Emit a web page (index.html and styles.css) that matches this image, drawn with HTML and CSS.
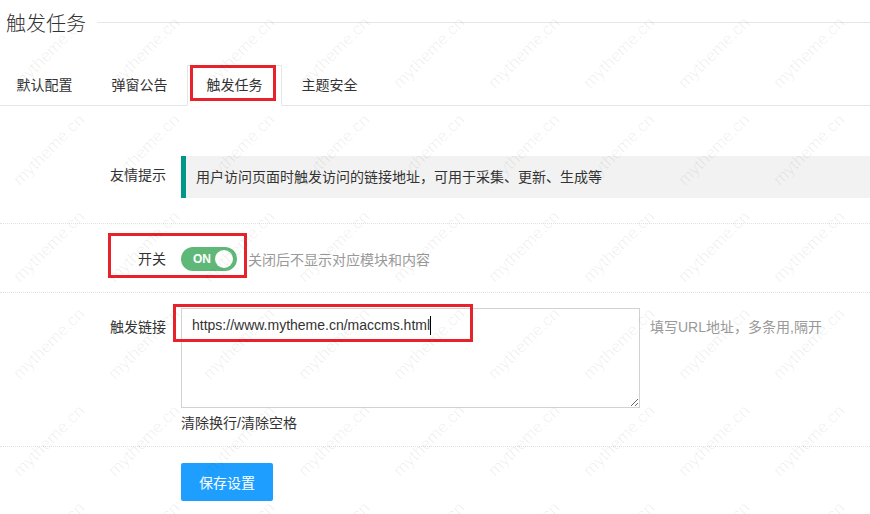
FILE: index.html
```html
<!DOCTYPE html>
<html lang="zh-CN">
<head>
  <meta charset="UTF-8">
  <meta name="viewport" content="width=device-width, initial-scale=1.0">
  <title>触发任务</title>
  <link rel="stylesheet" href="styles.css">
</head>
<body>
  <div class="page-title">
    <span class="page-title-text">触发任务</span>
    <span class="page-title-line"></span>
  </div>

  <ul class="tab-title">
    <li>默认配置</li>
    <li>弹窗公告</li>
    <li class="tab-this">触发任务<span class="mark mark-tab"></span></li>
    <li>主题安全</li>
  </ul>

  <form class="tab-body" onsubmit="return false">
    <div class="form-item item-tips">
      <label class="form-label">友情提示</label>
      <div class="tips-box">用户访问页面时触发访问的链接地址，可用于采集、更新、生成等</div>
    </div>

    <div class="form-item item-switch">
      <label class="form-label">开关</label>
      <div class="input-block">
        <span class="switch"><em>ON</em><i></i></span>
        <span class="form-hint">关闭后不显示对应模块和内容</span>
      </div>
      <span class="mark mark-switch"></span>
    </div>

    <div class="form-item item-links">
      <label class="form-label">触发链接</label>
      <div class="input-block">
        <div class="textarea-line">
          <textarea class="textarea" name="links">https://www.mytheme.cn/maccms.html</textarea>
          <span class="form-hint">填写URL地址，多条用,隔开</span>
          <span class="caret"></span>
          <span class="mark mark-link"></span>
        </div>
        <div class="text-tools">清除换行/清除空格</div>
      </div>
    </div>

    <div class="form-item item-submit">
      <span></span>
      <div class="input-block">
        <button class="btn" type="submit">保存设置</button>
      </div>
    </div>
  </form>

  <div class="watermark" id="watermark"></div>

  <script>
    // fill the watermark grid
    var wm = document.getElementById('watermark');
    for (var i = 0; i < 60; i++) {
      var s = document.createElement('span');
      s.textContent = 'mytheme.cn';
      wm.appendChild(s);
    }
  </script>
</body>
</html>
```

FILE: styles.css
```css
* {
  box-sizing: border-box;
}

body {
  margin: 0;
  background: #fff;
  color: #333;
  font-family: "Liberation Sans", "Noto Sans CJK SC", sans-serif;
  font-size: 14px;
  overflow: hidden;
  position: relative;
  min-height: 514px;
}

/* page heading with rule */
.page-title {
  display: flex;
  align-items: center;
  height: 28px;
  margin-top: 8px;
  padding-left: 6px;
}
.page-title-text {
  font-size: 20px;
  font-weight: 300;
  color: #333;
}
.page-title-line {
  flex: 1;
  border-top: 1px solid #e6e6e6;
  margin-left: 11px;
}

/* tabs */
.tab-title {
  display: flex;
  align-items: flex-start;
  list-style: none;
  margin: 29px 0 0;
  padding: 0;
  height: 41px;
  border-bottom: 1px solid #e6e6e6;
}
.tab-title li {
  position: relative;
  width: 95px;
  height: 41px;
  line-height: 39px;
  margin-bottom: -1px;
  text-align: center;
  border: 1px solid transparent;
  color: #333;
}
.tab-title li:first-child {
  margin-left: -3px;
}
.tab-title .tab-this {
  border-color: #e6e6e6;
  border-bottom-color: #fff;
  background: #fff;
}

/* form rows */
.form-item {
  position: relative;
  display: grid;
  grid-template-columns: 181px 1fr;
  border-bottom: 1px dotted #e2e2e2;
}
.form-label {
  text-align: right;
  padding-right: 15px;
  color: #333;
}
.item-tips {
  padding: 50px 0 25px;
}
.item-tips .form-label {
  line-height: 38px;
}
.tips-box {
  height: 42px;
  line-height: 42px;
  padding: 0 10px;
  background: #f2f2f2;
  border-left: 5px solid #009688;
  white-space: nowrap;
}

.item-switch {
  padding: 23px 0 21px;
}
.item-switch .form-label {
  line-height: 24px;
}
.input-block {
  display: flex;
  flex-direction: column;
  align-items: flex-start;
}
.item-switch .input-block {
  flex-direction: row;
  align-items: center;
}
.switch {
  position: relative;
  display: inline-flex;
  align-items: center;
  width: 56px;
  height: 24px;
  padding-left: 12px;
  border-radius: 20px;
  background: #5fb878;
}
.switch em {
  font-style: normal;
  font-size: 12px;
  font-weight: bold;
  color: #fff;
}
.switch i {
  position: absolute;
  right: 4px;
  top: 3px;
  width: 18px;
  height: 18px;
  border-radius: 50%;
  background: #fff;
}
.form-hint {
  color: #999;
  white-space: nowrap;
}
.item-switch .form-hint {
  margin-left: 11px;
}

.item-links {
  padding: 15px 0 13px;
}
.item-links .form-label {
  line-height: 38px;
}
.textarea-line {
  position: relative;
  display: flex;
  align-items: flex-start;
}
.textarea {
  display: block;
  width: 459px;
  height: 100px;
  padding: 6px 10px;
  border: 1px solid #d2d2d2;
  border-radius: 0;
  font-family: "Liberation Sans", "Noto Sans CJK SC", sans-serif;
  font-size: 14px;
  line-height: 20px;
  color: #333;
  resize: vertical;
  outline: none;
}
/* text cursor after the typed link */
.caret {
  position: absolute;
  left: 249px;
  top: 8px;
  width: 1px;
  height: 19px;
  background: #000;
}
.textarea-line .form-hint {
  margin-left: 10px;
  line-height: 38px;
}
.text-tools {
  margin-top: 5px;
  line-height: 20px;
  color: #333;
}

.item-submit {
  padding: 16px 0 20px;
  border-bottom: none;
}
.btn {
  height: 38px;
  padding: 0 18px;
  border: none;
  border-radius: 2px;
  background: #1e9fff;
  color: #fff;
  font-family: "Liberation Sans", "Noto Sans CJK SC", sans-serif;
  font-size: 14px;
  cursor: pointer;
}

/* red highlight frames */
.mark {
  position: absolute;
  border: 3px solid #e8222b;
  pointer-events: none;
}
.mark-tab {
  left: 2px;
  top: -1px;
  width: 86px;
  height: 36px;
}
.mark-switch {
  left: 108px;
  top: 9px;
  width: 139px;
  height: 45px;
}
.mark-link {
  left: -8px;
  top: -4px;
  width: 300px;
  height: 38px;
}

/* diagonal site watermark */
.watermark {
  position: absolute;
  left: 0;
  top: 0;
  width: 870px;
  height: 514px;
  display: grid;
  grid-template-columns: repeat(10, 95px);
  grid-auto-rows: 97px;
  padding: 4px 0 0 2px;
  overflow: hidden;
  pointer-events: none;
  z-index: 5;
}
.watermark span {
  place-self: center;
  white-space: nowrap;
  font-family: "Liberation Sans", sans-serif;
  font-size: 17px;
  color: rgba(0, 0, 0, 0.06);
  transform: rotate(-45deg);
}
```
